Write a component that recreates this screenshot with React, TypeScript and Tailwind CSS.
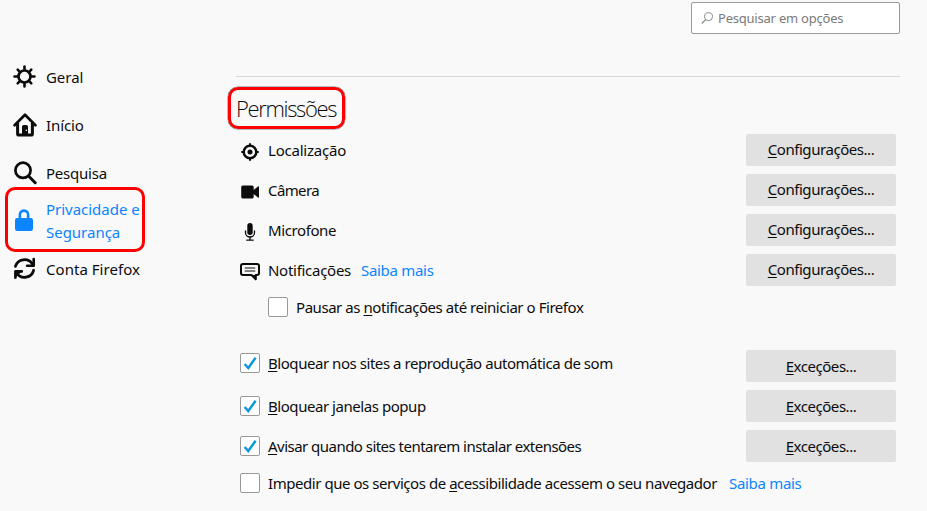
import type { ReactNode } from 'react'
import clsx from 'clsx'

const GearIcon = () => (
  <svg width="24" height="24" viewBox="0 0 24 24" fill="none" stroke="currentColor" strokeLinecap="round">
    <circle cx="11.5" cy="11.5" r="6" strokeWidth="2.7" />
    <path
      strokeWidth="2.6"
      d="M11.5 4.5v-3M11.5 18.5v3M4.5 11.5h-3M18.5 11.5h3M6.6 6.6 4.7 4.7M16.4 6.6l1.9-1.9M6.6 16.4l-1.9 1.9M16.4 16.4l1.9 1.9"
    />
  </svg>
)

const HomeIcon = () => (
  <svg width="24" height="24" viewBox="0 0 24 24" fill="none" stroke="currentColor" strokeLinecap="round" strokeLinejoin="round">
    <path strokeWidth="2.7" d="M1.6 12.2 12 1.7l10.4 10.5" />
    <path strokeWidth="3" d="M4.6 10.5v10.2c0 .8.6 1.4 1.4 1.4h12c.8 0 1.400-.6 1.400-1.400V10.500" />
    <path fill="currentColor" stroke="none" d="M9 22.5v-8.600c0-1 .8-1.800 1.800-1.800h2.400c1 0 1.800.8 1.800 1.800v8.600z" />
    <circle cx="13.3" cy="17.3" r=".8" fill="#f9f9fa" stroke="none" />
  </svg>
)

const SearchIcon = () => (
  <svg width="24" height="24" viewBox="0 0 24 24" fill="none" stroke="currentColor" strokeLinecap="round">
    <circle cx="10" cy="9.3" r="7.6" strokeWidth="2.7" />
    <path strokeWidth="3" d="m15.8 15.3 6.4 6.4" />
  </svg>
)

const LockIcon = () => (
  <svg width="24" height="24" viewBox="0 0 24 24" fill="currentColor">
    <path fillRule="evenodd" d="M5.6 9V5.6a5.4 5.4 0 0 1 10.8 0V9h1.4A2.2 2.2 0 0 1 20 11.2v8.600A2.200 2.200 0 0 1 17.800 22H4.200A2.200 2.200 0 0 1 2 19.800v-8.600A2.200 2.200 0 0 1 4.200 9zM8.200 9h5.600V5.700a2.800 2.800 0 0 0-5.600 0z" />
  </svg>
)

const SyncIcon = () => (
  <svg width="24" height="24" viewBox="0 0 24 24" fill="none" stroke="currentColor" strokeLinecap="round" strokeLinejoin="round">
    <path strokeWidth="2.8" d="M2.400 9.400A9.400 9.200 0 0 1 19.400 7M20.600 13.300A9.400 9.200 0 0 1 3.700 16.200" />
    <path strokeWidth="2.600" d="M20.700 2v6.800h-6.600" />
    <path strokeWidth="2.600" d="M2.400 20.800v-6.400H8.800" />
    <path fill="currentColor" stroke="none" d="M2.400 14.400h6.400l-6.400 6.400z" />
  </svg>
)

const LocationIcon = () => (
  <svg width="20" height="20" viewBox="0 0 20 20" fill="none" stroke="currentColor" strokeLinecap="round">
    <circle cx="10" cy="10" r="6.300" strokeWidth="2.500" />
    <circle cx="10" cy="10" r="2.500" fill="currentColor" stroke="none" />
    <path strokeWidth="2" d="M10 3V2M10 17v1M3 10H2M17 10h1" />
  </svg>
)

const CameraIcon = () => (
  <svg width="20" height="20" viewBox="0 0 20 20" fill="currentColor">
    <path d="M3 3.500h9c1 0 1.700.8 1.700 1.800v2.800l4.200-3.700c.5-.4 1.100-.2 1.100.5v10.200c0 .7-.6.900-1.100.5l-4.200-3.700v2.800c0 1-.7 1.800-1.700 1.800H3c-1 0-1.800-.8-1.800-1.800V5.300c0-1 .8-1.800 1.800-1.800z" />
  </svg>
)

const MicIcon = () => (
  <svg width="20" height="20" viewBox="0 0 20 20" fill="none" stroke="currentColor" strokeLinecap="round">
    <rect x="7.300" y="1" width="5.400" height="12" rx="2.700" fill="currentColor" stroke="none" />
    <path strokeWidth="1.300" d="M5.500 9v1.500a4.500 4.500 0 0 0 9 0V9M10 15.200V18M6.800 18.200h6.400" />
  </svg>
)

const NotificationIcon = () => (
  <svg width="20" height="20" viewBox="0 0 20 20" fill="none" stroke="currentColor" strokeLinejoin="round">
    <path strokeWidth="2" d="M3 2h14c1.100 0 2 .9 2 2v7c0 1.100-.9 2-2 2h-1.200v4.300L11.500 13H3c-1.100 0-2-.9-2-2V4c0-1.100.9-2 2-2z" />
    <path fill="currentColor" stroke="none" d="M11 13h5v5.400z" />
    <path strokeWidth="1.200" strokeLinecap="round" d="M5.200 6h9.600M5.200 9h9.600" />
  </svg>
)

const navItems = [
  { label: 'Geral', icon: <GearIcon />, className: 'tracking-[-0.05px]' },
  { label: 'Início', icon: <HomeIcon />, className: 'tracking-[-0.1px]' },
  { label: 'Pesquisa', icon: <SearchIcon />, className: 'tracking-[-0.22px]' },
  { label: 'Privacidade e Segurança', icon: <LockIcon />, className: 'tracking-[-0.02px]', active: true },
  { label: 'Conta Firefox', icon: <SyncIcon />, className: 'tracking-[0.04px]' },
]

const permissions = [
  { label: 'Localização', icon: <LocationIcon />, className: 'tracking-[-0.22px]' },
  { label: 'Câmera', icon: <CameraIcon />, className: 'tracking-[-0.6px]' },
  { label: 'Microfone', icon: <MicIcon />, className: 'tracking-[-0.4px]' },
  { label: 'Notificações', icon: <NotificationIcon />, className: 'tracking-[-0.28px]', link: true },
]

const Key = ({ children }: { children: ReactNode }) => (
  <span className="underline decoration-1 underline-offset-[2px] [text-decoration-skip-ink:none]">{children}</span>
)

const LearnMore = () => (
  <a href="#" className="tracking-[-0.3px] text-[#0a84ff]">Saiba mais</a>
)

function Button({ children, className }: { children: ReactNode; className?: string }) {
  return (
    <button className={clsx('block h-8 w-[150px] shrink-0 rounded-[2px] bg-[#e1e1e1] text-center', className)}>
      {children}
    </button>
  )
}

function Checkbox({ checked = false }: { checked?: boolean }) {
  return (
    <span
      role="checkbox"
      aria-checked={checked}
      className="flex size-5 shrink-0 items-center justify-center rounded-[2px] border border-[#999] bg-white"
    >
      {checked && (
        <svg width="18" height="18" viewBox="0 0 18 18" fill="none" stroke="#0996db" strokeWidth="2.4">
          <path d="m3.600 10 3.700 4 7.300-10.300" />
        </svg>
      )}
    </span>
  )
}

export default function App() {
  return (
    <div className="flex h-[511px] w-[927px] overflow-hidden bg-[#f9f9fa] font-['Noto_Sans',sans-serif] text-[15px] leading-5 tracking-[-0.45px] text-[#0c0c0d]">
      <nav className="w-[236px] shrink-0 pt-[53px]">
        {navItems.map((item) => (
          <div
            key={item.label}
            className={clsx('relative flex h-12 items-center gap-[9px] pl-[13px]', item.active && 'text-[#0a84ff]')}
          >
            <span className="shrink-0">{item.icon}</span>
            <span className={clsx('w-[98px] leading-[23px]', item.className)}>{item.label}</span>
            {item.active && (
              <span className="absolute -top-[10px] left-[5px] h-[65px] w-[140px] rounded-[10px] border-3 border-[#fe0000]" />
            )}
          </div>
        ))}
      </nav>

      <main className="w-[664px] shrink-0">
        <div className="ml-auto mt-[2px] flex h-8 w-[209px] items-center rounded-[2px] border border-[#999] bg-white pl-[9px] text-[13px] tracking-[-0.22px] text-[#7a7a7a]">
          <svg width="13" height="13" viewBox="0 0 13 13" fill="none" stroke="#8a8a8a" className="mr-1">
            <circle cx="7.5" cy="4.7" r="4" />
            <path d="M4.700 7.600.8 11.500" strokeWidth="1.300" />
          </svg>
          Pesquisar em opções
        </div>

        <hr className="mt-[42px] border-[#d7d7db]" />

        <h1 className="-ml-2 mt-[10px] flex h-[42px] w-[117px] items-center whitespace-nowrap rounded-[10px] border-[3px] border-[#fe0000] pl-[5px] font-['Open_Sans'] text-[22px] font-light tracking-[-1.35px] shadow-[0_0_0_0.5px_#6b8a8a]">
          Permissões
        </h1>

        <div className="mt-[1px]">
          {permissions.map((item) => (
            <div key={item.label} className="flex h-10 items-center pl-1 pr-1">
              <span className="mt-1 shrink-0">{item.icon}</span>
              <span className={clsx('-mt-px ml-2', item.className)}>{item.label}</span>
              {item.link && <span className="-mt-px ml-[10px]"><LearnMore /></span>}
              <span className="ml-auto"><Button className="pb-[3px]"><Key>C</Key>onfigurações...</Button></span>
            </div>
          ))}
        </div>

        <label className="mt-[7px] flex h-5 items-center gap-2 pl-8">
          <Checkbox />
          <span className="-mt-px">Pausar as <Key>n</Key>otificações até reiniciar o Firefox</span>
        </label>

        <div className="mt-[33px] flex h-8 pl-1 pr-1">
          <label className="mt-[3px] flex h-5 grow items-center gap-2">
            <Checkbox checked />
            <span className="-mt-px"><Key>B</Key>loquear nos sites a reprodução automática de som</span>
          </label>
          <Button><Key>E</Key>xceções...</Button>
        </div>
        <div className="mt-2 flex h-8 items-center pl-1 pr-1">
          <label className="flex h-5 grow items-center gap-2">
            <Checkbox checked />
            <span className="-mt-px"><Key>B</Key>loquear janelas popup</span>
          </label>
          <Button><Key>E</Key>xceções...</Button>
        </div>
        <div className="mt-2 flex h-8 items-center pl-1 pr-1">
          <label className="flex h-5 grow items-center gap-2">
            <Checkbox checked />
            <span className="-mt-px tracking-[-0.53px]"><Key>A</Key>visar quando sites tentarem instalar extensões</span>
          </label>
          <Button><Key>E</Key>xceções...</Button>
        </div>
        <div className="mt-[11px] flex h-5 items-center pl-1">
          <Checkbox />
          <span className="-mt-px ml-2">Impedir que os serviços de <Key>a</Key>cessibilidade acessem o seu navegador</span>
          <span className="-mt-px ml-3"><LearnMore /></span>
        </div>
      </main>
    </div>
  )
}
